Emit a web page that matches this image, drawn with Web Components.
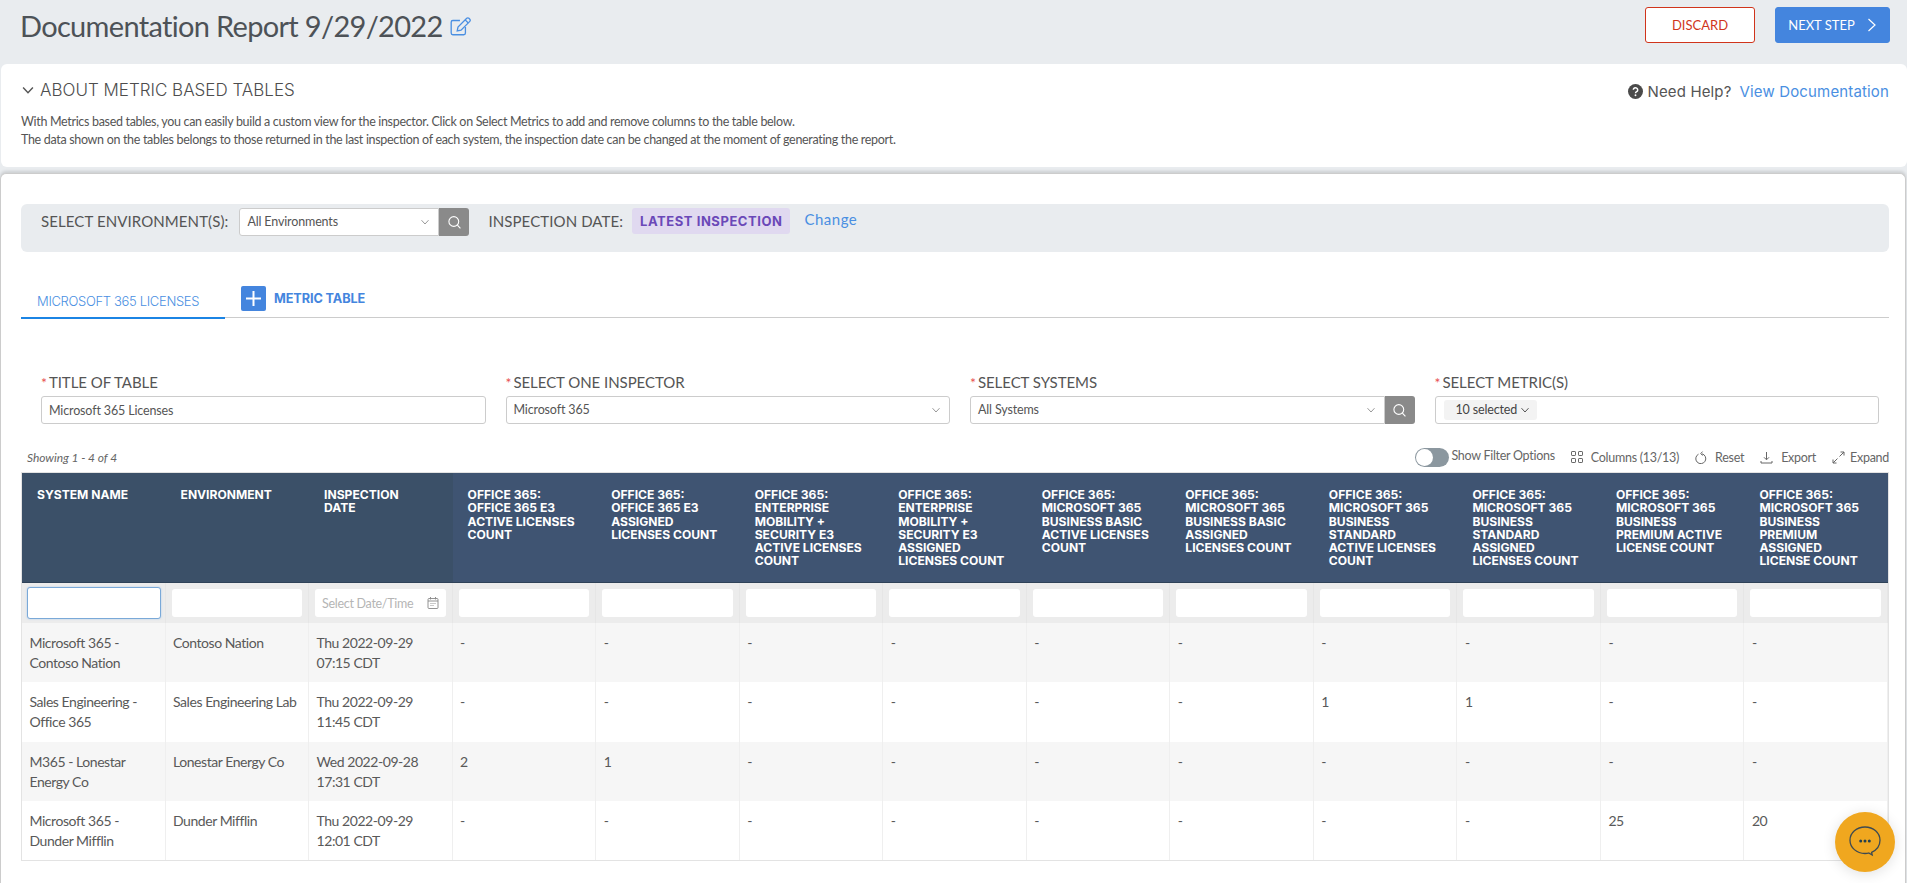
<!DOCTYPE html>
<html>
<head>
<meta charset="utf-8">
<title>Documentation Report</title>
<style>
  html, body { margin: 0; height: 100%; overflow: hidden; }
  body { background: #e9ecef; font-family: Lato, "Liberation Sans", sans-serif; color: #555; }
</style>
</head>
<body>
<report-header title-text="Documentation Report 9/29/2022"></report-header>
<about-panel></about-panel>
<report-panel>
  <env-bar></env-bar>
  <table-tabs></table-tabs>
  <table-form></table-form>
  <table-toolbar></table-toolbar>
  <metric-table></metric-table>
</report-panel>
<chat-button></chat-button>

<script>
const SANS = 'Inter, "Liberation Sans", sans-serif';

// small helper, every element just sets its shadow html once
class BaseEl extends HTMLElement {
  constructor() {
    super();
    this._shadowRoot = this.attachShadow({ mode: 'open' });
  }
  connectedCallback() {
    this._shadowRoot.innerHTML = this.render();
  }
}

const chevron = (size = 10, color = '#999') => `<svg width="${size}" height="${size}" viewBox="0 0 10 10" fill="none" stroke="${color}" stroke-width="1"><path d="M1.5 3.2 5 7l3.5-3.8"/></svg>`;
const searchIcon = `<svg width="15" height="15" viewBox="0 0 15 15" fill="none" stroke="#fff" stroke-width="1.1"><circle cx="6.8" cy="6.5" r="4.9"/><path d="m10.4 10.2 3 3.2"/></svg>`;

class ReportHeader extends BaseEl {
  render() {
    return `
    <style>
      :host { display: flex; align-items: flex-start; justify-content: space-between; height: 64px; padding: 0 17px 0 20px; box-sizing: border-box; }
      .title { display: flex; align-items: center; gap: 6px; margin-top: 6px; height: 40px; }
      h1 { margin: 0; font: 400 29px/40px Lato, sans-serif; color: #4d5257; letter-spacing: -.68px; }
      .btns { display: flex; gap: 20px; margin-top: 7px; }
      button { height: 36px; border-radius: 3px; font: 400 13px Lato, sans-serif; box-sizing: border-box; display: flex; align-items: center; justify-content: center; }
      .discard { width: 110px; background: #fff; border: 1px solid #d0341b; color: #d0341b; }
      .next { width: 115px; background: #4485de; border: 1px solid #4485de; color: #fff; gap: 12px; }
    </style>
    <div class="title">
      <h1>${this.getAttribute('title-text')}</h1>
      <svg width="23" height="22" viewBox="0 0 21 20" fill="none" stroke="#4a8fe2" stroke-width="1.2"><path d="M15 11v5.5a1.5 1.5 0 0 1-1.5 1.5h-10A1.5 1.5 0 0 1 2 16.500v-10A1.500 1.500 0 0 1 3.500 5H10"/><path d="m7.500 14.500.7-3.500 8-8a1.400 1.400 0 0 1 2 0l.8.8a1.400 1.400 0 0 1 0 2l-8 8z"/><path d="m14.800 4.400 2.800 2.800"/></svg>
    </div>
    <div class="btns">
      <button class="discard">DISCARD</button>
      <button class="next">NEXT STEP <svg width="10" height="16" viewBox="0 0 10 16" fill="none" stroke="#fff" stroke-width="1.2"><path d="m1.500 2 6.500 6-6.500 6"/></svg></button>
    </div>`;
  }
}

class AboutPanel extends BaseEl {
  render() {
    return `
    <style>
      :host { display: block; height: 103px; margin-left: 1px; box-sizing: border-box; background: #fff; border-radius: 6px; padding: 17px 18px 0 20px; position: relative; }
      .top { display: flex; justify-content: space-between; align-items: center; height: 18px; }
      h2 { margin: 0; font: 300 17px/18px ${SANS}; color: #4d4d4d; display: flex; align-items: center; gap: 5px; }
      .help { display: flex; align-items: center; font: 400 15px/18px ${SANS}; color: #555; margin-top: 3px; letter-spacing: .15px; }
      .help svg { margin-right: 4px; }
      a { color: #4a8fe2; margin-left: 8px; }
      p { margin: 0; font: 400 12.500px/18px Lato, sans-serif; color: #555; letter-spacing: -.32px; }
      .text { margin-top: 14px; }
    </style>
    <div class="top">
      <h2>${chevron(14, '#555')}ABOUT METRIC BASED TABLES</h2>
      <div class="help">
        <svg width="15" height="15" viewBox="0 0 15 15"><circle cx="7.500" cy="7.500" r="7.500" fill="#4a4a4a"/><path d="M5.300 5.800a2.200 2.100 0 1 1 3.300 1.900c-.7.400-1.100.8-1.100 1.500" fill="none" stroke="#fff" stroke-width="1.500"/><circle cx="7.500" cy="11.300" r=".95" fill="#fff"/></svg>
        Need Help?<a>View Documentation</a>
      </div>
    </div>
    <div class="text">
      <p>With Metrics based tables, you can easily build a custom view for the inspector. Click on Select Metrics to add and remove columns to the table below.</p>
      <p>The data shown on the tables belongs to those returned in the last inspection of each system, the inspection date can be changed at the moment of generating the report.</p>
    </div>`;
  }
}

class ReportPanel extends BaseEl {
  render() {
    return `
    <style>
      :host { display: block; margin: 6px 1px 0 0; height: 720px; background: #fff; border: 1px solid #ccc; border-bottom: 0; border-radius: 6px 6px 0 0; padding: 30px 16px 0 20px; box-sizing: border-box; box-shadow: 0 -2px 3px rgba(0,0,0,.12); position: relative; }
    </style>
    <slot></slot>`;
  }
}

class SelectBox extends BaseEl {
  render() {
    const search = this.hasAttribute('search');
    return `
    <style>
      :host { display: flex; height: 28px; box-sizing: border-box; }
      .box { flex: 1; display: flex; align-items: center; justify-content: space-between; background: #fff; border: 1px solid #ccc; border-radius: 3px 0 0 3px; padding: 0 8px 0 7px; font: 400 12.500px Lato, sans-serif; color: #555; min-width: 0; letter-spacing: -.15px; }
      .box span { margin-top: -2px; }
      .search { width: 30px; background: #8a8a8a; border-radius: 0 3px 3px 0; display: flex; align-items: center; justify-content: center; }
      :host([plain]) .box { border-radius: 3px; }
    </style>
    <div class="box"><span>${this.getAttribute('text')}</span>${chevron()}</div>
    ${search ? `<div class="search">${searchIcon}</div>` : ''}`;
  }
}
customElements.define('select-box', SelectBox);

class EnvBar extends BaseEl {
  render() {
    return `
    <style>
      :host { display: flex; align-items: flex-start; height: 48px; box-sizing: border-box; padding: 4px 0 0 20px; background: #e9ecef; border-radius: 6px; font: 400 15px/26px Lato, sans-serif; color: #555; }
      .lbl { white-space: nowrap; letter-spacing: .1px; }
      select-box { width: 230px; margin: 0 19px 0 11px; }
      .badge { background: #e0d9f0; color: #6a48b8; font: 700 13px/26px Inter, sans-serif; letter-spacing: .55px; padding: 0 8px; border-radius: 3px; margin: 0 14px 0 9px; white-space: nowrap; }
      a { color: #4a8fe2; letter-spacing: .5px; margin-top: -2px; }
    </style>
    <span class="lbl">SELECT ENVIRONMENT(S):</span>
    <select-box text="All Environments" search></select-box>
    <span class="lbl">INSPECTION DATE:</span>
    <span class="badge">LATEST INSPECTION</span>
    <a>Change</a>`;
  }
}

class TableTabs extends BaseEl {
  render() {
    return `
    <style>
      :host { display: flex; align-items: flex-start; margin-top: 34px; border-bottom: 1px solid #ccc; height: 31px; }
      .tab { width: 204px; box-sizing: border-box; height: 33px; padding: 6px 0 0 16px; border-bottom: 2px solid #1b84e4; font: 300 13px/18px ${SANS}; color: #4a8fe2; white-space: nowrap; letter-spacing: -.33px; }
      .add { display: flex; gap: 8px; margin-left: 16px; }
      .plus { width: 25px; height: 25px; border-radius: 2px; background: #4485de; display: flex; align-items: center; justify-content: center; }
      .lbl { font: 700 12.700px/25px ${SANS}; color: #4485de; letter-spacing: -.1px; }
    </style>
    <div class="tab">MICROSOFT 365 LICENSES</div>
    <div class="add">
      <span class="plus"><svg width="15" height="15" viewBox="0 0 15 15" stroke="#fff" stroke-width="2"><path d="M7.500 0v15M0 7.500h15"/></svg></span>
      <span class="lbl">METRIC TABLE</span>
    </div>`;
  }
}

class TableForm extends BaseEl {
  render() {
    const field = (label, inner) => `<div class="f"><label><i>*</i>${label}</label>${inner}</div>`;
    return `
    <style>
      :host { display: grid; grid-template-columns: repeat(4, minmax(0, 1fr)); gap: 20px; margin: 55px 10px 0 20px; }
      label { display: block; font: 400 15px/18px Lato, sans-serif; color: #555; margin-bottom: 4px; white-space: nowrap; letter-spacing: -.05px; }
      i { color: #e85050; font-style: normal; font-size: 14px; margin-right: 2px; }
      .input { height: 28px; box-sizing: border-box; border: 1px solid #ccc; border-radius: 3px; display: flex; align-items: center; padding: 0 7px; font: 400 12.500px Lato, sans-serif; color: #555; letter-spacing: -.15px; }
      .chip { background: #f3f3f3; border-radius: 3px; padding: 0 7px 0 12px; height: 20px; line-height: 20px; display: flex; align-items: center; gap: 3px; margin-left: 1px; color: #444; }
    </style>
    ${field('TITLE OF TABLE', `<div class="input">Microsoft 365 Licenses</div>`)}
    ${field('SELECT ONE INSPECTOR', `<select-box text="Microsoft 365" plain></select-box>`)}
    ${field('SELECT SYSTEMS', `<select-box text="All Systems" search></select-box>`)}
    ${field('SELECT METRIC(S)', `<div class="input"><span class="chip">10 selected ${chevron(10, '#555')}</span></div>`)}`;
  }
}

class TableToolbar extends BaseEl {
  render() {
    return `
    <style>
      :host { display: flex; align-items: center; justify-content: space-between; height: 20px; margin: 23px 0 5px 6px; font: 400 12.500px Lato, sans-serif; color: #666; }
      em { font-size: 12px; letter-spacing: -.05px; }
      .tools { display: flex; align-items: center; letter-spacing: -.28px; }
      .item { display: flex; align-items: center; gap: 8px; margin-left: 16px; }
      .toggle { width: 34px; height: 19px; border-radius: 10px; background: #8b979f; position: relative; margin-right: 2px; box-sizing: border-box; }
      .toggle::after { content: ""; position: absolute; left: 1px; top: 1px; width: 17px; height: 17px; border-radius: 50%; background: #fff; }
      .opt { margin-top: -3px; }
    </style>
    <em>Showing 1 - 4 of 4</em>
    <div class="tools">
      <span class="toggle"></span><span class="opt">Show Filter Options</span>
      <span class="item"><svg width="12" height="12" viewBox="0 0 12 12" fill="none" stroke="#666"><rect x=".5" y=".5" width="4" height="4" rx=".6"/><rect x="7.500" y=".5" width="4" height="4" rx=".6"/><rect x=".5" y="7.500" width="4" height="4" rx=".6"/><rect x="7.500" y="7.500" width="4" height="4" rx=".6"/></svg>Columns (13/13)</span>
      <span class="item"><svg width="12" height="13" viewBox="0 0 12 13" fill="none" stroke="#666"><path d="M3.500 3.200A5 5 0 1 0 7 2.800"/><path d="M7.500.6 5.700 2.700l2 1.700"/></svg>Reset</span>
      <span class="item"><svg width="13" height="13" viewBox="0 0 13 13" fill="none" stroke="#666"><path d="M6.500 1v7.500M4 6.300l2.500 2.500L9 6.300M1 10v2h11v-2"/></svg>Export</span>
      <span class="item" style="gap:5px"><svg width="13" height="13" viewBox="0 0 13 13" fill="none" stroke="#666"><path d="M7.500 5.500 12 1M8.500 1H12v3.500M5.500 7.500 1 12M1 8.500V12h3.500"/></svg>Expand</span>
    </div>`;
  }
}

const fixedCols = ['SYSTEM NAME', 'ENVIRONMENT', 'INSPECTION DATE'];
const metricCols = [
  'OFFICE 365: OFFICE 365 E3 ACTIVE LICENSES COUNT',
  'OFFICE 365: OFFICE 365 E3 ASSIGNED LICENSES COUNT',
  'OFFICE 365: ENTERPRISE MOBILITY + SECURITY E3 ACTIVE LICENSES COUNT',
  'OFFICE 365: ENTERPRISE MOBILITY + SECURITY E3 ASSIGNED LICENSES COUNT',
  'OFFICE 365: MICROSOFT 365 BUSINESS BASIC ACTIVE LICENSES COUNT',
  'OFFICE 365: MICROSOFT 365 BUSINESS BASIC ASSIGNED LICENSES COUNT',
  'OFFICE 365: MICROSOFT 365 BUSINESS STANDARD ACTIVE LICENSES COUNT',
  'OFFICE 365: MICROSOFT 365 BUSINESS STANDARD ASSIGNED LICENSES COUNT',
  'OFFICE 365: MICROSOFT 365 BUSINESS PREMIUM ACTIVE LICENSE COUNT',
  'OFFICE 365: MICROSOFT 365 BUSINESS PREMIUM ASSIGNED LICENSE COUNT'
];
const rows = [
  ['Microsoft 365 - Contoso Nation', 'Contoso Nation', 'Thu 2022-09-29 07:15 CDT', '-', '-', '-', '-', '-', '-', '-', '-', '-', '-'],
  ['Sales Engineering - Office 365', 'Sales Engineering Lab', 'Thu 2022-09-29 11:45 CDT', '-', '-', '-', '-', '-', '-', '1', '1', '-', '-'],
  ['M365 - Lonestar Energy Co', 'Lonestar Energy Co', 'Wed 2022-09-28 17:31 CDT', '2', '1', '-', '-', '-', '-', '-', '-', '-', '-'],
  ['Microsoft 365 - Dunder Mifflin', 'Dunder Mifflin', 'Thu 2022-09-29 12:01 CDT', '-', '-', '-', '-', '-', '-', '-', '-', '25', '20']
];

class MetricTable extends BaseEl {
  render() {
    const headCells = fixedCols.map(c => `<div class="h fixed">${c}</div>`).join('')
      + metricCols.map(c => `<div class="h">${c}</div>`).join('');
    const filters = [...fixedCols, ...metricCols].map((c, i) => {
      if (i === 0) return `<div class="fc"><div class="fi focus"></div></div>`;
      if (i === 2) return `<div class="fc"><div class="fi date"><span>Select Date/Time</span><svg width="12" height="12" viewBox="0 0 12 12" fill="none" stroke="#888" stroke-width=".9"><rect x="1" y="1.500" width="10" height="10" rx="1"/><path d="M1 4h10M3.500 0v2.500M8.500 0v2.500M3.500 6.500h1M5.500 6.500h1M7.500 6.500h1M3.500 8.500h1M5.500 8.500h1"/></svg></div></div>`;
      return `<div class="fc"><div class="fi"></div></div>`;
    }).join('');
    const body = rows.map((r, i) => r.map(v => `<div class="c ${i % 2 ? '' : 'odd'}">${v}</div>`).join('')).join('');
    return `
    <style>
      :host { display: grid; grid-template-columns: repeat(13, minmax(0, 1fr)); width: 1868px; box-sizing: border-box; border: 1px solid #e3e3e3; border-top: 1px solid #e3e3e3; }
      .h { height: 110px; box-sizing: border-box; background: #3f5472; color: #fff; font: 700 12.100px/13.300px ${SANS}; padding: 15px 16px 0 15px; border-bottom: 1px solid #2f4258; }
      .fixed { background: #3b5068; padding-right: 30px; }
      .fc { height: 40px; box-sizing: border-box; background: #ececec; padding: 6px 6px; border-right: 1px solid #e6e6e6; }
      .fi { height: 28px; background: #fff; border-radius: 3px; box-sizing: border-box; display: flex; align-items: center; justify-content: space-between; padding: 0 7px; font: 400 12.500px Lato, sans-serif; color: #b5b5b5; white-space: nowrap; letter-spacing: -.3px; }
      .focus { height: 32px; margin: -2px 0 0 -1px; width: 134px; border: 1px solid #7aa9d8; box-shadow: 0 0 2px #a8c8ea; }
      .c { height: 59.250px; box-sizing: border-box; padding: 10px 8px 0 7.500px; font: 400 14px/20px Lato, sans-serif; color: #595959; border-right: 1px solid #efefef; background: #fff; letter-spacing: -.45px; }
      .odd { background: #f6f6f6; }
    </style>
    ${headCells}${filters}${body}`;
  }
}

class ChatButton extends BaseEl {
  render() {
    return `
    <style>
      :host { position: fixed; left: 1835px; top: 812px; width: 60px; height: 60px; border-radius: 50%; background: #f0a71f; box-shadow: 0 2px 14px rgba(0,0,0,.12); display: flex; align-items: center; justify-content: center; }
    </style>
    <svg width="34" height="34" viewBox="0 0 34 34" fill="none"><path d="M17 2C8.700 2 2 7.800 2 15.200S8.700 28.500 17 28.500c1.500 0 2.500-.1 3.700-.5l3.500 2-.6-2.700c5-2.200 8.400-6.700 8.400-12C32 7.800 25.300 2 17 2Z" stroke="#3d4a52" stroke-width="1.300"/><circle cx="12.700" cy="16" r="1.500" fill="#24404f"/><circle cx="17" cy="16" r="1.500" fill="#24404f"/><circle cx="21.300" cy="16" r="1.500" fill="#24404f"/></svg>`;
  }
}

customElements.define('report-header', ReportHeader);
customElements.define('about-panel', AboutPanel);
customElements.define('report-panel', ReportPanel);
customElements.define('env-bar', EnvBar);
customElements.define('table-tabs', TableTabs);
customElements.define('table-form', TableForm);
customElements.define('table-toolbar', TableToolbar);
customElements.define('metric-table', MetricTable);
customElements.define('chat-button', ChatButton);
</script>
</body>
</html>
